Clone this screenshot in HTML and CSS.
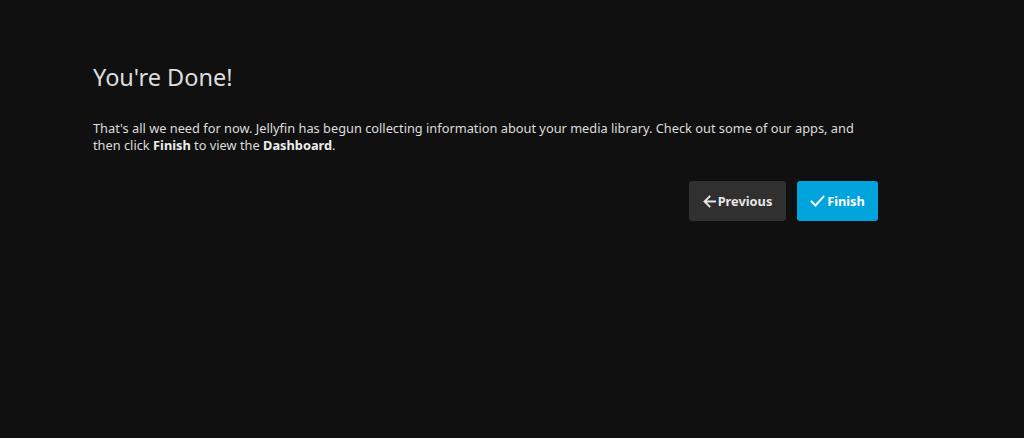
FILE: index.html
```html
<!DOCTYPE html>
<html lang="en">
<head>
    <meta charset="UTF-8">
    <meta name="viewport" content="width=device-width, initial-scale=1.0">
    <title>Jellyfin - Setup Complete</title>
    <link rel="stylesheet" href="styles.css">
</head>
<body>
    <div class="wizard-page">
        <h1>You're Done!</h1>

        <p class="intro">That's all we need for now. Jellyfin has begun collecting information about your media library. Check out some of our apps, and then click <b>Finish</b> to view the <b>Dashboard</b>.</p>

        <div class="wizard-buttons">
            <button class="btn btn-prev">
                <svg width="13" height="13" viewBox="0 0 13 13" fill="none" stroke="currentColor" stroke-width="1.9" stroke-linecap="square" stroke-linejoin="miter"><path d="M12 6.5H2M6.5 1.5L1.5 6.5l5 5"/></svg>
                <span>Previous</span>
            </button>
            <button class="btn btn-finish">
                <svg width="15" height="12" viewBox="0 0 15 12" fill="none" stroke="currentColor" stroke-width="1.9" stroke-linecap="square" stroke-linejoin="miter"><path d="M1.5 6.5l4 4L13.5 1.5"/></svg>
                <span>Finish</span>
            </button>
        </div>
    </div>
</body>
</html>
```

FILE: styles.css
```css
html, body {
    margin: 0;
    padding: 0;
    background: #101010;
    color: #dddddd;
    font-family: "Noto Sans", "Open Sans", sans-serif;
}

.wizard-page {
    width: 785px;
    margin-left: 93px;
    padding-top: 61px;
}

h1 {
    margin: 0;
    font-size: 23.5px;
    font-weight: 400;
    line-height: 32px;
    color: #dddddd;
}

.intro {
    margin: 27px 0 0;
    font-size: 12.8px;
    line-height: 16.5px;
    color: #dddddd;
}

.intro b {
    font-weight: 700;
    color: #eeeeee;
}

.wizard-buttons {
    display: flex;
    justify-content: flex-end;
    gap: 11px;
    margin-top: 28px;
}

.btn {
    display: flex;
    align-items: center;
    justify-content: center;
    gap: 2px;
    height: 40px;
    padding: 0;
    border: none;
    border-radius: 3px;
    font-family: "Noto Sans", "Open Sans", sans-serif;
    font-size: 12.8px;
    font-weight: 700;
    color: #ffffff;
    cursor: pointer;
}

.btn-prev {
    width: 97px;
    background: #303030;
    color: #e6e6e6;
}

.btn-finish {
    width: 81px;
    background: #00a4dc;
}
```
